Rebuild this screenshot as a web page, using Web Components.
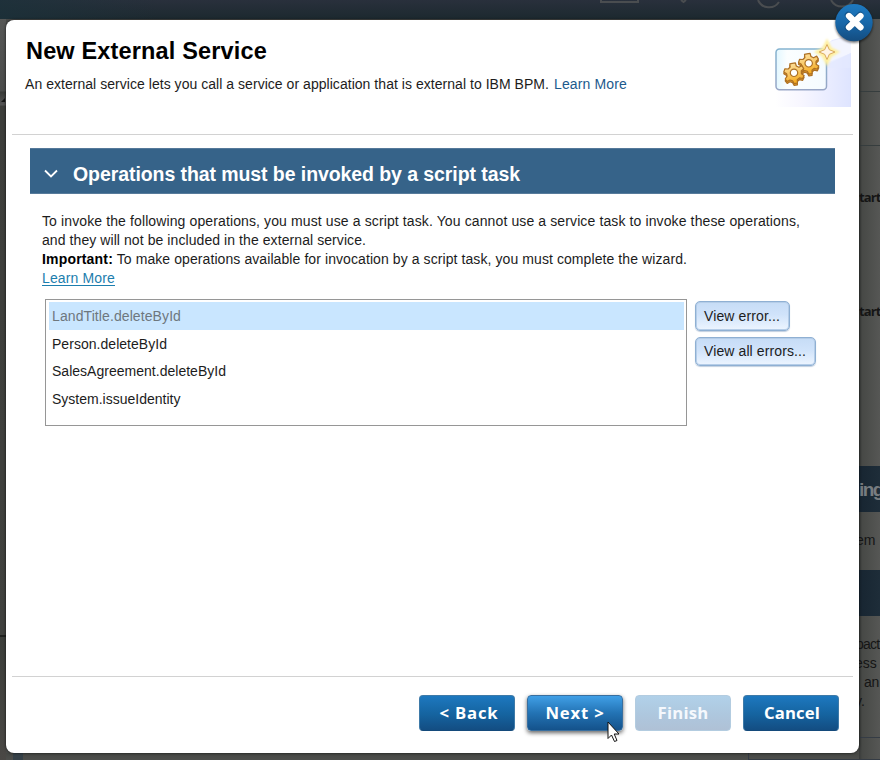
<!DOCTYPE html>
<html lang="en">
<head>
<meta charset="utf-8">
<title>New External Service</title>
<style>
html,body{margin:0;width:880px;height:760px;overflow:hidden}
body{font:14px/19px "Liberation Sans",Arial,sans-serif;color:#1c1c1c}
</style>
</head>
<body>
<wizard-page></wizard-page>
<script>
function define(name, html, ready) {
  const t = document.createElement('template');
  t.innerHTML = html;
  customElements.define(name, class extends HTMLElement {
    constructor() {
      super();
      this.attachShadow({mode: 'open'}).append(document.importNode(t.content, true));
    }
    connectedCallback() { if (ready) ready(this); }
  });
}

/* A single line of text tracked out or in to a given width. */
define('fit-text', `<style>:host{display:inline-block;white-space:pre}</style><slot></slot>`, el => {
  el.style.letterSpacing = '0px';
  const n = el.textContent.length;
  const w = el.getBoundingClientRect().width;
  if (w) el.style.letterSpacing = ((+el.getAttribute('w') - w) / n) + 'px';
});

define('wizard-button', `<style>
:host{display:flex;box-sizing:border-box;width:96px;height:36px;align-items:center;justify-content:center;border:1px solid #3e7aa8;border-bottom-color:#144a7b;border-radius:4px;background:linear-gradient(#1d78bf,#15639f 55%,#134d82);color:#fff;font:bold 16.7px/20px "Open Sans","Noto Sans",sans-serif}
:host([hot]){background:linear-gradient(#409fe6,#2373b4 50%,#14528b);border-color:#396f9f;box-shadow:0 2px 4px rgba(0,0,0,.6)}
:host([off]){background:linear-gradient(#b1d1e9,#aec7de 55%,#afc1d6);border-color:#b3cce0;color:#f5f8fd}
</style><slot></slot>`);

define('small-button', `<style>
:host{display:flex;box-sizing:border-box;height:30px;align-items:center;padding:0 0 0 8px;border:1px solid #8fb0d3;border-radius:5px;background:linear-gradient(#c6dcf6,#d0e3fa 45%,#edf5ff);box-shadow:inset 0 0 0 1px #b5cde8,0 1px 1px #c3d0e0;font-size:14px;color:#1c1c1c}
</style><slot></slot>`);

define('operation-list', `<style>
:host{display:flex;flex-direction:column;box-sizing:border-box;width:642px;height:127px;border:1px solid #969696;padding:2px 2px 0 3px;background:#fff}
::slotted(*){box-sizing:border-box;flex:none;display:flex;align-items:center;height:27.6px;padding:2px 0 0 3px}
</style><slot></slot>`);

define('list-item', `<style>:host([selected]){background:#c9e6ff;color:#6e777e}</style><slot></slot>`);

define('section-bar', `<style>
:host{display:flex;box-sizing:border-box;height:46px;align-items:center;padding:5px 0 0 14px;background:#366389;border-top:1px solid #55799a;border-bottom:1px solid #577b9b;color:#fff;font:bold 19.5px/24px "Liberation Sans",Arial,sans-serif}
svg{flex:none;width:15px;height:10px;margin-right:14px}
</style><svg viewBox="0 0 15 10"><path d="M1 1.5 7 7.5 13 1.5" fill="none" stroke="#fff" stroke-width="1.8"/></svg><slot></slot>`);

define('service-icon', `<style>:host{display:block;width:80px;height:72px;margin-right:-2px}svg{display:block}</style>
<svg width="80" height="72" viewBox="775 35 80 72">
<defs>
<linearGradient id="bg"><stop offset="0" stop-color="#fff"/><stop offset=".35" stop-color="#f7f6ff"/><stop offset="1" stop-color="#dee4ff"/></linearGradient>
<linearGradient id="fr"><stop offset="0" stop-color="#e2f7ff"/><stop offset=".22" stop-color="#fbfeff"/><stop offset="1" stop-color="#f5fbff"/></linearGradient>
<linearGradient id="fs" x2="0" y2="1"><stop offset="0" stop-color="#85b3d0"/><stop offset="1" stop-color="#98a6c6"/></linearGradient>
<linearGradient id="g" x2=".3" y2="1"><stop offset="0" stop-color="#ffe4a5"/><stop offset=".5" stop-color="#f9cc70"/><stop offset="1" stop-color="#f7ad23"/></linearGradient>
<filter id="b" x="-50%" y="-50%" width="200%" height="200%"><feGaussianBlur stdDeviation="1.2"/></filter>
<path id="gear" d="M-1.8-9.5 1.4-10 2.3-6.8 4.9-5.5 8-7.2 9.7-4.2 7.3-1.8 7.4.9 10.1 2.7 8.7 5.7 5.4 5.1 3.3 6.9 3.4 10.2.2 10.9-1.4 8-4 7.2-6.8 8.8-8.8 6.2-6.9 3.4-7.4.9-10.2-.8-9.1-4-5.8-3.8-3.8-5.8-4.2-8.9-1.8-9.5"/>
</defs>
<path d="M775 107V91L832 40 851 35V107Z" fill="url(#bg)"/>
<path d="M817 50Q828 40 851 36V53L826 65Z" fill="#f3f5ff"/>
<path d="M815 68Q833 60 851 53V68Z" fill="#e5eaff" opacity=".6"/>
<rect x="776" y="48.9" width="50.5" height="40.8" rx="3.5" fill="url(#fr)" stroke="url(#fs)" stroke-width="1.5"/>
<g stroke="#ad7024" stroke-width="1.2" stroke-linejoin="round">
<g transform="translate(808.700 63.300)"><use href="#gear" y="1.8" fill="#e09928"/><use href="#gear" fill="url(#g)"/><circle r="3.700" fill="#fff"/></g>
<g transform="translate(794 72.800)"><use href="#gear" y="1.8" fill="#e09928"/><use href="#gear" fill="url(#g)"/><circle r="3.700" fill="#fff"/></g>
</g>
<path d="M827 43 830 49 836 52 830 55.5 827 62 823.5 55 818 52 824 49Z" fill="#ffe98e" stroke="#fff0a0" stroke-width="4" filter="url(#b)"/>
<path d="M827 44.500 829.300 49.700 835 52 829.300 54.300 827 59.500 824.700 54.300 819 52 824.700 49.700Z" fill="#fff4e6" stroke="#d9aa60" stroke-width="1"/>
</svg>`);

define('close-button', `<style>:host{display:block;width:46px;height:46px}svg{display:block}</style>
<svg width="46" height="46" viewBox="0 0 46 46"><defs><linearGradient id="c" x2="0" y2="1"><stop offset="0" stop-color="#1e7ac1"/><stop offset=".55" stop-color="#1765a6"/><stop offset="1" stop-color="#144c7f"/></linearGradient><filter id="s" x="-30%" y="-30%" width="160%" height="160%"><feGaussianBlur stdDeviation="1.3"/></filter></defs>
<circle cx="23" cy="24" r="19" fill="#000" opacity=".5" filter="url(#s)"/><circle cx="23" cy="22.600" r="18.700" fill="url(#c)"/>
<path d="M17.200 15.300 29.200 27.300M29.200 15.300 17.200 27.300" stroke="#0b3b66" stroke-width="7" stroke-linecap="round" opacity=".5"/>
<path d="M18 16 29.500 27.300M29.500 16 18 27.300" stroke="#fff" stroke-width="6.300" stroke-linecap="round"/></svg>`);

define('dimmed-page', `<style>
:host{display:grid;grid-template-rows:19px 741px;width:880px;height:760px;background:#4a4b49;overflow:hidden}
header{background:linear-gradient(90deg,rgba(28,49,58,.8),transparent 18%),linear-gradient(#29303c,#1c292f)}
header svg{display:block}
.cols{display:grid;grid-template-columns:6px 853px 21px}
.left{background:linear-gradient(#565756 0,#4b4c4b 72px,#393a38 73px,#555 86px,#3d3e3b 87px,#40413e 616px,#20211f 616px,#20211f 618px,#3c3e3a 618px,#4a4845);padding-top:77px}
.left svg{display:block}
.mid{align-self:end;display:flex;height:7px;background:linear-gradient(#454743,#4e4f4d)}
.mid i{display:block;width:10px;margin-left:7px;background:#364148}
.mid b{display:block;width:111px;margin-left:725px;border-left:1px solid #353c45;border-bottom:1px solid #353c45;box-sizing:border-box}
.right{display:flex;flex-direction:column;background:linear-gradient(90deg,#383a39,#474946 15%,#565755);overflow:hidden;color:#151515;white-space:nowrap}
.right div{flex:none;box-sizing:border-box}
.line{border-bottom:1px solid #363d3e}
.bold{font:bold 13px/20px "Open Sans",sans-serif;letter-spacing:-.9px}
.band{background:linear-gradient(90deg,#172531,#1e2d39);height:46px}
.band.t{color:#777c80;font:bold 19px/48px "Liberation Sans",sans-serif;letter-spacing:-1.6px}
</style>
<header><svg width="880" height="19"><g fill="none" stroke="#4a4d50" stroke-width="2"><path d="M601 0V2H638V0M681 0 683.500 2 686 0"/><path d="M758 0A12 12 0 0 0 779 2M831 0A12.500 12.500 0 0 0 853 0"/></g></svg></header>
<div class="cols"><div class="left"><svg width="6" height="8"><path d="M1 6 5 2V6Z" fill="#151515"/></svg></div>
<div class="mid"><i></i><b></b></div>
<div class="right">
<div class="line" style="height:73px"></div><div class="line" style="height:54px"></div>
<div class="bold" style="height:114px;padding-top:41px">tart</div><div class="bold" style="height:206px;padding-top:41px">tart</div>
<div class="band t">ing</div><div style="height:58px;padding-top:19px;margin-left:-3px">em</div><div class="band"></div>
<div style="height:121px;padding-top:19px;line-height:19px"><div style="margin-left:-3px;letter-spacing:-.8px">pact</div><div style="margin-left:-4px">ess</div><div style="padding-left:5px;letter-spacing:-.3px">an</div><div style="margin-left:-4px">y.</div></div>
<div style="height:23px;border-top:1px solid #353c45;border-bottom:1px solid #353c45"></div>
</div></div>`);

define('wizard-dialog', `<style>
:host{display:flex;flex-direction:column;box-sizing:border-box;width:853px;height:733px;background:#fff;border-radius:8px;box-shadow:0 0 3px rgba(0,0,0,.75);padding:0 6px}
.head{display:flex;justify-content:space-between;box-sizing:border-box;height:115px;padding:15px 0 0 13px;border-bottom:1px solid #d2d2d2}
h1{margin:0 0 0 1px;padding-top:2px;font:bold 23.5px/28px "Liberation Sans",Arial,sans-serif;color:#000;height:40px;box-sizing:border-box}
.sub{display:flex;gap:5px;line-height:19px}
.sub fit-text + fit-text{color:#1c5a8d}
.main{flex:1;padding:13px 18px 0}
.copy{padding:18px 0 0 12px;line-height:19px}
.copy > div{display:flex;height:19px}
.copy b{color:#000}
.link{color:#1c7eae;text-decoration:underline;text-underline-offset:2px}
.work{display:flex;gap:8px;padding:11px 0 0 15px}
.buttons{display:flex;flex-direction:column;gap:6px;padding-top:2px;align-items:flex-start}
.foot{display:flex;box-sizing:border-box;height:77px;gap:12px;justify-content:flex-end;padding:18px 14px 0 0;border-top:1px solid #d2d2d2}
</style>
<div class="head"><div><h1><fit-text w="241">New External Service</fit-text></h1><div class="sub"><fit-text w="524">An external service lets you call a service or application that is external to IBM BPM.</fit-text><fit-text w="73">Learn More</fit-text></div></div><service-icon></service-icon></div>
<div class="main"><section-bar><fit-text w="447">Operations that must be invoked by a script task</fit-text></section-bar>
<div class="copy"><div><fit-text w="758">To invoke the following operations, you must use a script task. You cannot use a service task to invoke these operations,</fit-text></div>
<div><fit-text w="324">and they will not be included in the external service.</fit-text></div>
<div><b><fit-text w="71">Important:</fit-text></b><fit-text w="574"> To make operations available for invocation by a script task, you must complete the wizard.</fit-text></div>
<div><fit-text class="link" w="73">Learn More</fit-text></div></div>
<div class="work"><operation-list><list-item selected><fit-text w="129">LandTitle.deleteById</fit-text></list-item><list-item><fit-text w="115">Person.deleteById</fit-text></list-item><list-item><fit-text w="174">SalesAgreement.deleteById</fit-text></list-item><list-item><fit-text w="128.5">System.issueIdentity</fit-text></list-item></operation-list>
<div class="buttons"><small-button style="width:95px"><fit-text w="76">View error...</fit-text></small-button><small-button style="width:121px;height:29px"><fit-text w="102">View all errors...</fit-text></small-button></div></div></div>
<div class="foot"><wizard-button><fit-text w="59" style="margin-left:4px">&lt; Back</fit-text></wizard-button><wizard-button hot><fit-text w="59">Next &gt;</fit-text></wizard-button><wizard-button off><fit-text w="51">Finish</fit-text></wizard-button><wizard-button><fit-text w="56" style="margin-left:2px">Cancel</fit-text></wizard-button></div>`);

define('mouse-pointer', `<style>:host{display:block}svg{display:block}</style><svg width="14" height="22" viewBox="0 0 14 22"><path d="M1 1V17.500L4.500 14 7.500 20.500 10 19.500 7.200 13H12Z" fill="#fff" stroke="#111"/></svg>`);

define('wizard-page', `<style>
:host{display:block;position:relative;width:880px;height:760px;overflow:hidden}
wizard-dialog{position:absolute;left:6px;top:20px}
close-button{position:absolute;left:831px;top:0}
mouse-pointer{position:absolute;left:607px;top:721px}
</style><dimmed-page></dimmed-page><wizard-dialog></wizard-dialog><close-button></close-button><mouse-pointer></mouse-pointer>`);
</script>
</body>
</html>
